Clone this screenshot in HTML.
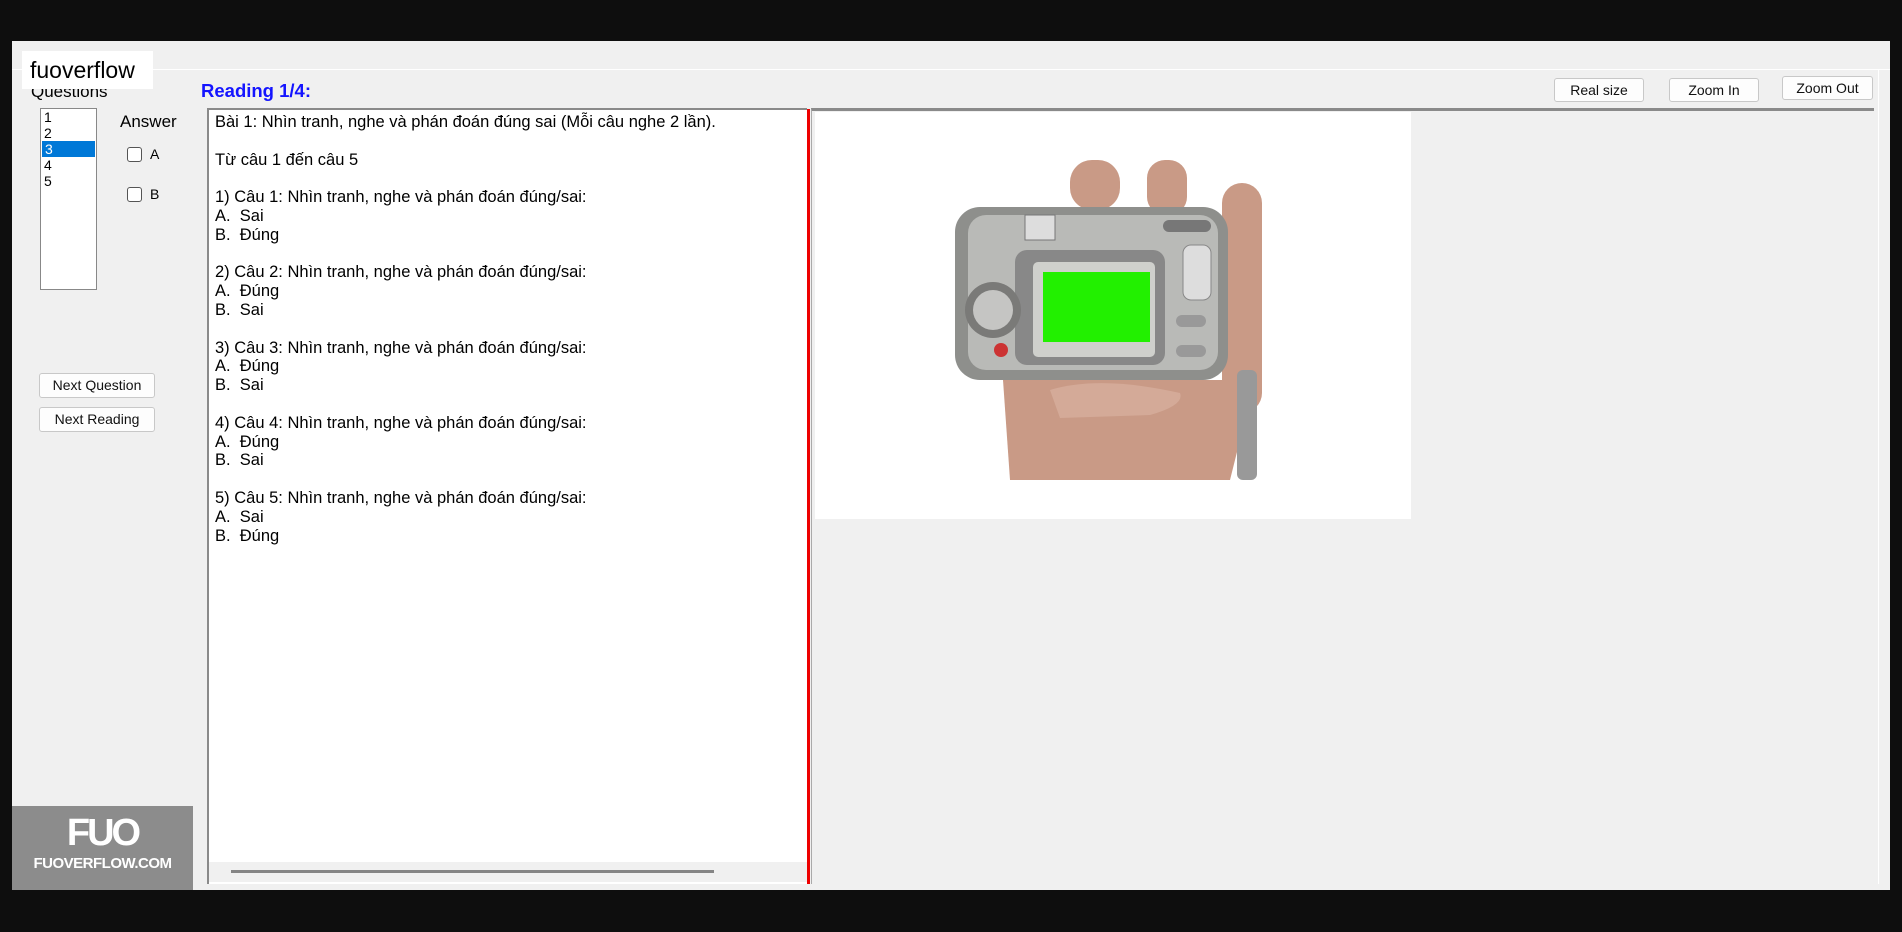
<!DOCTYPE html>
<html><head><meta charset="utf-8"><style>
*{margin:0;padding:0;box-sizing:border-box}
body{width:1902px;height:932px;background:#0e0e0e;position:relative;overflow:hidden;font-family:"Liberation Sans",Arial,sans-serif;color:#000}
.a{position:absolute}
.btn{position:absolute;background:#fdfdfd;border:1px solid #c8c8c8;border-radius:3px;font-size:14px;text-align:center;line-height:22px;color:#111}
.t{font-size:16.5px;line-height:18.8px;white-space:pre}
.cb{position:absolute;width:15px;height:15px;border:1.5px solid #555;border-radius:3px;background:#fff}
</style></head><body>
<div class="a" style="left:12px;top:41px;width:1878px;height:849px;background:#f0f0f0"></div>
<div class="a" style="left:12px;top:69px;width:1878px;height:1px;background:#fff"></div>
<div class="a" style="left:1878px;top:69px;width:1px;height:815px;background:#fff"></div>
<div class="a" style="left:22px;top:51px;width:131px;height:38px;background:#fff;font-size:23px;line-height:38px;padding-left:8px">fuoverflow</div>
<div class="a" style="left:31px;top:82px;font-size:17px;line-height:20px;clip-path:inset(7px 0 0 0)">Questions</div>
<div class="a" style="left:201px;top:80px;font-size:18.5px;font-weight:bold;color:#1414ff;line-height:22px">Reading 1/4:</div>
<div class="a" style="left:40px;top:108px;width:57px;height:182px;background:#fff;border:1px solid #888;font-size:14px;line-height:16px">
<div style="padding-left:3px">1</div><div style="padding-left:3px">2</div><div style="padding-left:3px;background:#0078d7;color:#fff;margin:0 1px">3</div><div style="padding-left:3px">4</div><div style="padding-left:3px">5</div></div>
<div class="a" style="left:120px;top:112px;font-size:17px">Answer</div>
<div class="cb" style="left:127px;top:147px"></div><div class="a" style="left:150px;top:146px;font-size:14px">A</div>
<div class="cb" style="left:127px;top:187px"></div><div class="a" style="left:150px;top:186px;font-size:14px">B</div>
<div class="btn" style="left:39px;top:373px;width:116px;height:25px">Next Question</div>
<div class="btn" style="left:39px;top:407px;width:116px;height:25px">Next Reading</div>
<div class="btn" style="left:1554px;top:78px;width:90px;height:24px">Real size</div>
<div class="btn" style="left:1669px;top:78px;width:90px;height:24px">Zoom In</div>
<div class="btn" style="left:1782px;top:76px;width:91px;height:24px">Zoom Out</div>
<div class="a" style="left:207px;top:108px;width:600px;height:776px;background:#fff;border-left:2px solid #8a8a8a;border-top:2px solid #8a8a8a"></div>
<div class="a t" style="left:215px;top:113px">Bài 1: Nhìn tranh, nghe và phán đoán đúng sai (Mỗi câu nghe 2 lần).

Từ câu 1 đến câu 5

1) Câu 1: Nhìn tranh, nghe và phán đoán đúng/sai:
A.  Sai
B.  Đúng

2) Câu 2: Nhìn tranh, nghe và phán đoán đúng/sai:
A.  Đúng
B.  Sai

3) Câu 3: Nhìn tranh, nghe và phán đoán đúng/sai:
A.  Đúng
B.  Sai

4) Câu 4: Nhìn tranh, nghe và phán đoán đúng/sai:
A.  Đúng
B.  Sai

5) Câu 5: Nhìn tranh, nghe và phán đoán đúng/sai:
A.  Sai
B.  Đúng</div>
<div class="a" style="left:209px;top:862px;width:598px;height:20px;background:#f0f0f0"></div>
<div class="a" style="left:231px;top:870px;width:483px;height:3px;background:#858585"></div>
<div class="a" style="left:807px;top:109px;width:3px;height:775px;background:#e00"></div>
<div class="a" style="left:811px;top:108px;width:1063px;height:776px;background:#f0f0f0;border-top:3px solid #8a8a8a;border-left:1px solid #aaa"></div>
<div class="a" style="left:815px;top:112px;width:596px;height:407px;background:#fff">
<svg width="596" height="407" viewBox="815 112 596 407" style="display:block">
<g fill="#c99a86">
<rect x="1070" y="160" width="50" height="50" rx="22"/>
<rect x="1147" y="160" width="40" height="55" rx="18"/>
<rect x="1222" y="183" width="40" height="230" rx="20"/>
<path d="M1003 380 L1228 380 L1245 420 L1230 480 L1010 480 Z"/>
</g>
<rect x="1237" y="370" width="20" height="110" rx="6" fill="#999"/>
<rect x="955" y="207" width="273" height="173" rx="25" fill="#8e8f8c"/>
<rect x="968" y="215" width="250" height="155" rx="18" fill="#b9bab7"/>
<rect x="1015" y="250" width="150" height="115" rx="12" fill="#888"/>
<rect x="1033" y="262" width="122" height="95" rx="5" fill="#cfd0cc"/>
<rect x="1043" y="272" width="107" height="70" fill="#22f000"/>
<circle cx="993" cy="310" r="28" fill="#7a7a78"/><circle cx="993" cy="310" r="20" fill="#c5c5c3"/>
<circle cx="1001" cy="350" r="7" fill="#c33"/>
<rect x="1183" y="245" width="28" height="55" rx="8" fill="#ddd" stroke="#888"/>
<rect x="1176" y="315" width="30" height="12" rx="6" fill="#999"/>
<rect x="1176" y="345" width="30" height="12" rx="6" fill="#999"/>
<rect x="1025" y="215" width="30" height="25" fill="#ddd" stroke="#777"/>
<rect x="1163" y="220" width="48" height="12" rx="6" fill="#777"/>
<path d="M1050 390 Q1100 375 1180 393 Q1185 405 1150 415 L1060 418 Z" fill="#d4aa98"/>
</svg></div>
<div class="a" style="left:12px;top:806px;width:181px;height:84px;background:#8c8c8c;color:#fff;text-align:center">
<div style="font-size:38px;font-weight:bold;line-height:42px;margin-top:6px;letter-spacing:-3px">FUO</div>
<div style="font-size:15px;font-weight:bold;line-height:20px;letter-spacing:-0.5px">FUOVERFLOW.COM</div></div>
</body></html>
